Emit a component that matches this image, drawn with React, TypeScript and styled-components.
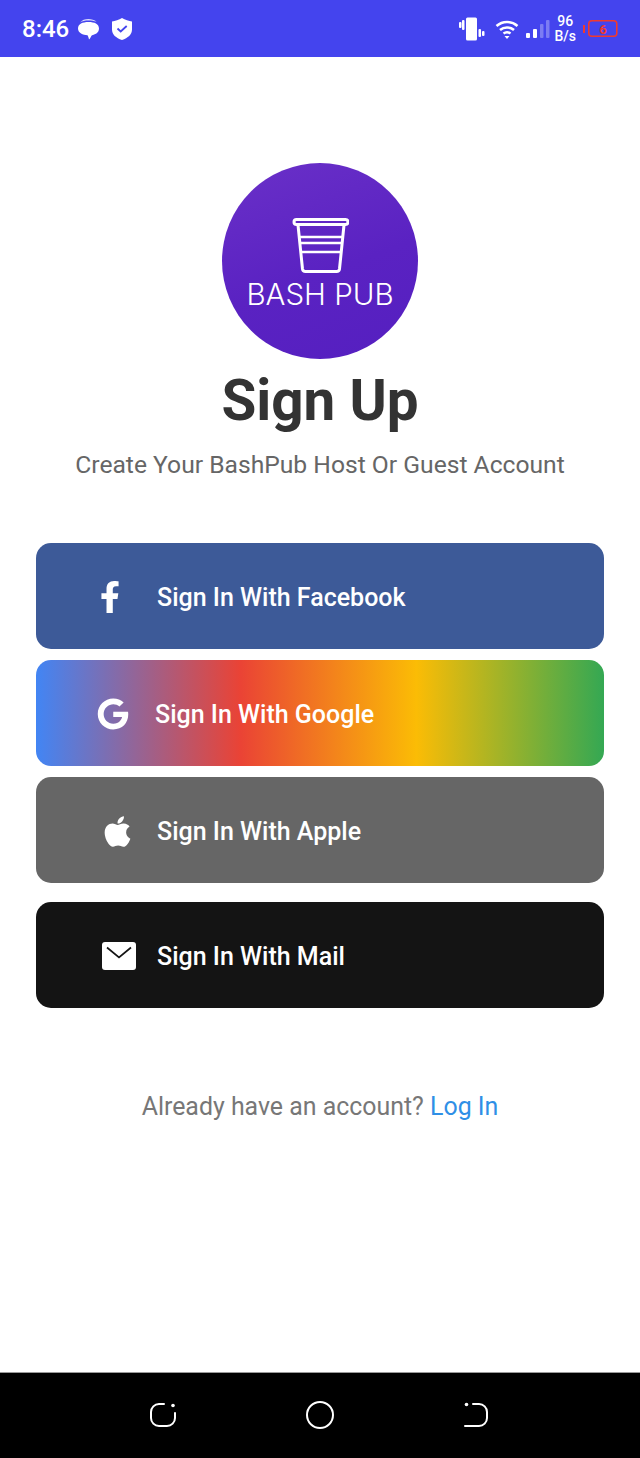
import React from "react";
import styled, { createGlobalStyle } from "styled-components";
import { FaApple, FaFacebookF, FaGoogle } from "react-icons/fa";

const GlobalStyle = createGlobalStyle`
    html, body {
        margin: 0;
        padding: 0;
        background: #ffffff;
        font-family: Roboto, "Liberation Sans", sans-serif;
    }
`;

const Screen = styled.div`
    width: 640px;
    height: 1458px;
    display: flex;
    flex-direction: column;
    overflow: hidden;
`;

const StatusBar = styled.div`
    height: 57px;
    flex: none;
    background: #4444ee;
    color: #ffffff;
    display: flex;
    align-items: center;
    justify-content: space-between;
    padding: 0 22px;
    box-sizing: border-box;
`;

const StatusGroup = styled.div`
    display: flex;
    align-items: center;
`;

const StatusIcon = styled.span<{ $left: number }>`
    display: flex;
    margin-left: ${(p) => p.$left}px;
`;

const Time = styled.span`
    font-size: 24px;
    font-weight: 500;
`;

const NetSpeed = styled.span`
    font-size: 14px;
    font-weight: 500;
    line-height: 15px;
    text-align: center;
    margin: 0 7px 0 4px;
`;

const Main = styled.main`
    flex: 1;
    display: flex;
    flex-direction: column;
    align-items: center;
    padding-top: 106px;
`;

const LogoCircle = styled.div`
    width: 196px;
    height: 196px;
    flex: none;
    border-radius: 50%;
    background: linear-gradient(160deg, #6a30c8 0%, #5a22c2 55%, #551fc0 100%);
    display: flex;
    flex-direction: column;
    align-items: center;
    padding-top: 54px;
    box-sizing: border-box;
    color: #ffffff;
`;

const LogoText = styled.div`
    font-family: Inter, sans-serif;
    font-weight: 300;
    font-size: 29.5px;
    line-height: 34px;
    margin: 2px 0 1px;
    white-space: nowrap;
`;

const Title = styled.h1`
    margin: 6px 0 0;
    font-size: 56.6px;
    line-height: 72px;
    font-weight: 700;
    color: #333333;
`;

const Subtitle = styled.p`
    margin: 13px 0 0;
    font-size: 24.65px;
    line-height: 30px;
    color: #666666;
`;

const ButtonList = styled.div`
    margin-top: 63px;
    width: 568px;
    display: flex;
    flex-direction: column;
`;

const SignInButton = styled.button<{ $bg: string; $inset: number; $gap: number; $after: number }>`
    height: 106px;
    border: 0;
    border-radius: 15px;
    background: ${(p) => p.$bg};
    color: #ffffff;
    font-family: inherit;
    font-size: 25px;
    font-weight: 500;
    display: flex;
    align-items: center;
    gap: ${(p) => p.$gap}px;
    padding: 2px 0 0 ${(p) => p.$inset}px;
    margin-bottom: ${(p) => p.$after}px;
`;

const Footer = styled.p`
    margin: 84px 0 0;
    font-size: 24.9px;
    line-height: 30px;
    color: #777777;
`;

const LogIn = styled.a`
    color: #2f8fe6;
`;

const NavBar = styled.nav`
    height: 86px;
    flex: none;
    background: #000000;
    border-top: 1px solid #9a9a9a;
    box-sizing: border-box;
    display: flex;
    align-items: center;
    justify-content: center;
    gap: 129px;
    padding: 0 2px 2px 0;
`;

const CupIcon = () => (
    <svg width="58" height="58" viewBox="-1 0 58 58" fill="none" stroke="#fff" strokeWidth="3">
        <rect x="2" y="2.500" width="54" height="5" rx="2.500" />
        <path d="M6 8l4.500 44a3 3 0 0 0 3 2.500h31a3 3 0 0 0 3-2.500L52 8" />
        <path d="M7.500 20h43M8.500 26h41M9 35h40" strokeWidth="2.400" />
    </svg>
);

const ChatIcon = () => (
    <svg width="23" height="24" viewBox="0 0 23 24" fill="#fff">
        <path d="M3 5.500c2-2.500 5-3.500 8.500-3.500 3 0 6 .8 8 2.800C17 3.800 14.500 3.500 11.500 3.500 8 3.500 5.500 4 3 5.500z" opacity=".8" />
        <path d="M11.500 5c6 0 10.500 2 10.500 6.500 0 4.500-4.500 6.300-7 6.700-1 .8-1.500 3-3 4.300-.5-2-.8-3.200-1.500-4.200C6 18 1 16 1 11.500 1 7 5.500 5 11.500 5z" />
    </svg>
);

const ShieldIcon = () => (
    <svg width="22" height="24" viewBox="0 0 22 24">
        <path d="M11 1c3 2 7 3 10 3.500v8c0 5-4 8.500-10 10.500C5 21 1 17.500 1 12.500v-8C4 4 8 3 11 1z" fill="#fff" />
        <path d="M6.500 11.500l3.200 3 6-5.500" fill="none" stroke="#4444ee" strokeWidth="1.800" />
    </svg>
);

const VibrateIcon = () => (
    <svg width="26" height="24" viewBox="0 0 26 24" fill="#fff">
        <rect x="7" y="0.500" width="11" height="23" rx="1.500" />
        <rect x="0" y="5" width="2.500" height="6" rx="1" />
        <rect x="3" y="3" width="2.500" height="10" rx="1" />
        <rect x="19.500" y="12" width="2.500" height="8" rx="1" />
        <rect x="23" y="14" width="2.500" height="5" rx="1" />
    </svg>
);

const WifiIcon = () => (
    <svg width="24" height="22" viewBox="0 0 24 22" fill="none" stroke="#fff" strokeWidth="2.500">
        <path d="M1.500 8c6-5.500 15-5.500 21 0M5 12c4-3.500 10-3.500 14 0M8.500 15.500c2-1.500 5-1.500 7 0" />
        <path d="M9.500 18h5L12 21z" fill="#fff" stroke="none" />
    </svg>
);

const SignalIcon = () => (
    <svg width="24" height="20" viewBox="0 0 24 20">
        <rect x="0" y="14" width="4" height="5" rx="1" fill="#fff" />
        <rect x="7" y="10" width="4" height="9" rx="1" fill="#fff" />
        <rect x="14" y="5" width="3.500" height="14" rx="1" fill="#fff" opacity=".3" />
        <rect x="20" y="1" width="3.500" height="18" rx="1" fill="#fff" opacity=".3" />
    </svg>
);

const BatteryIcon = () => (
    <svg width="35" height="18" viewBox="0 0 35 18">
        <rect x="0" y="5" width="2" height="8" fill="#f03a2e" />
        <rect x="5.800" y="0.800" width="28" height="15.500" rx="3" fill="none" stroke="#f03a2e" strokeWidth="1.600" />
        <text x="20" y="13.500" fontSize="13" fontFamily="Roboto" fontWeight="700" fill="#f03a2e" textAnchor="middle">6</text>
    </svg>
);

const MailIcon = () => (
    <svg width="34" height="28" viewBox="0 0 34 28">
        <rect width="34" height="28" rx="3" fill="#fff" />
        <path d="M5 5.500l12 10 12-10" fill="none" stroke="#141414" strokeWidth="1.700" />
    </svg>
);

const RecentIcon = () => (
    <svg width="28" height="26" viewBox="0 0 28 26" fill="none" stroke="#fff" strokeWidth="2">
        <path d="M15 2h-5a8 8 0 0 0-8 8v6a8 8 0 0 0 8 8h8a8 8 0 0 0 8-8v-5" strokeLinecap="round" />
        <circle cx="24" cy="3.500" r="1.800" fill="#fff" stroke="none" />
    </svg>
);

const HomeIcon = () => (
    <svg width="28" height="28" viewBox="0 0 28 28" fill="none" stroke="#fff" strokeWidth="2">
        <circle cx="14" cy="14" r="13" />
    </svg>
);

const BackIcon = () => (
    <svg width="26" height="26" viewBox="0 0 26 26" fill="none" stroke="#fff" strokeWidth="2">
        <path d="M10 2h6a8 8 0 0 1 8 8v6a8 8 0 0 1-8 8H2" strokeLinecap="round" />
        <circle cx="3.500" cy="2.500" r="1.800" fill="#fff" stroke="none" />
    </svg>
);

const App = () => {
    return (
        <Screen>
            <GlobalStyle />
            <StatusBar>
                <StatusGroup>
                    <Time>8:46</Time>
                    <StatusIcon $left={8}>
                        <ChatIcon />
                    </StatusIcon>
                    <StatusIcon $left={11}>
                        <ShieldIcon />
                    </StatusIcon>
                </StatusGroup>
                <StatusGroup>
                    <VibrateIcon />
                    <StatusIcon $left={10}>
                        <WifiIcon />
                    </StatusIcon>
                    <StatusIcon $left={7}>
                        <SignalIcon />
                    </StatusIcon>
                    <NetSpeed>
                        96
                        <br />
                        B/s
                    </NetSpeed>
                    <BatteryIcon />
                </StatusGroup>
            </StatusBar>
            <Main>
                <LogoCircle>
                    <CupIcon />
                    <LogoText>BASH PUB</LogoText>
                </LogoCircle>
                <Title>Sign Up</Title>
                <Subtitle>Create Your BashPub Host Or Guest Account</Subtitle>
                <ButtonList>
                    <SignInButton $bg="#3d5a98" $inset={58} $gap={31} $after={11}>
                        <FaFacebookF size={32} />
                        Sign In With Facebook
                    </SignInButton>
                    <SignInButton
                        $bg="linear-gradient(90deg, #4285f4 0%, #ea4335 36%, #fbbc05 67%, #34a853 100%)"
                        $inset={61}
                        $gap={26}
                        $after={11}
                    >
                        <FaGoogle size={32} />
                        Sign In With Google
                    </SignInButton>
                    <SignInButton $bg="#666666" $inset={64} $gap={22} $after={19}>
                        <FaApple size={35} />
                        Sign In With Apple
                    </SignInButton>
                    <SignInButton $bg="#141414" $inset={66} $gap={21} $after={0}>
                        <MailIcon />
                        Sign In With Mail
                    </SignInButton>
                </ButtonList>
                <Footer>
                    Already have an account? <LogIn>Log In</LogIn>
                </Footer>
            </Main>
            <NavBar>
                <RecentIcon />
                <HomeIcon />
                <BackIcon />
            </NavBar>
        </Screen>
    );
};

export default App;
